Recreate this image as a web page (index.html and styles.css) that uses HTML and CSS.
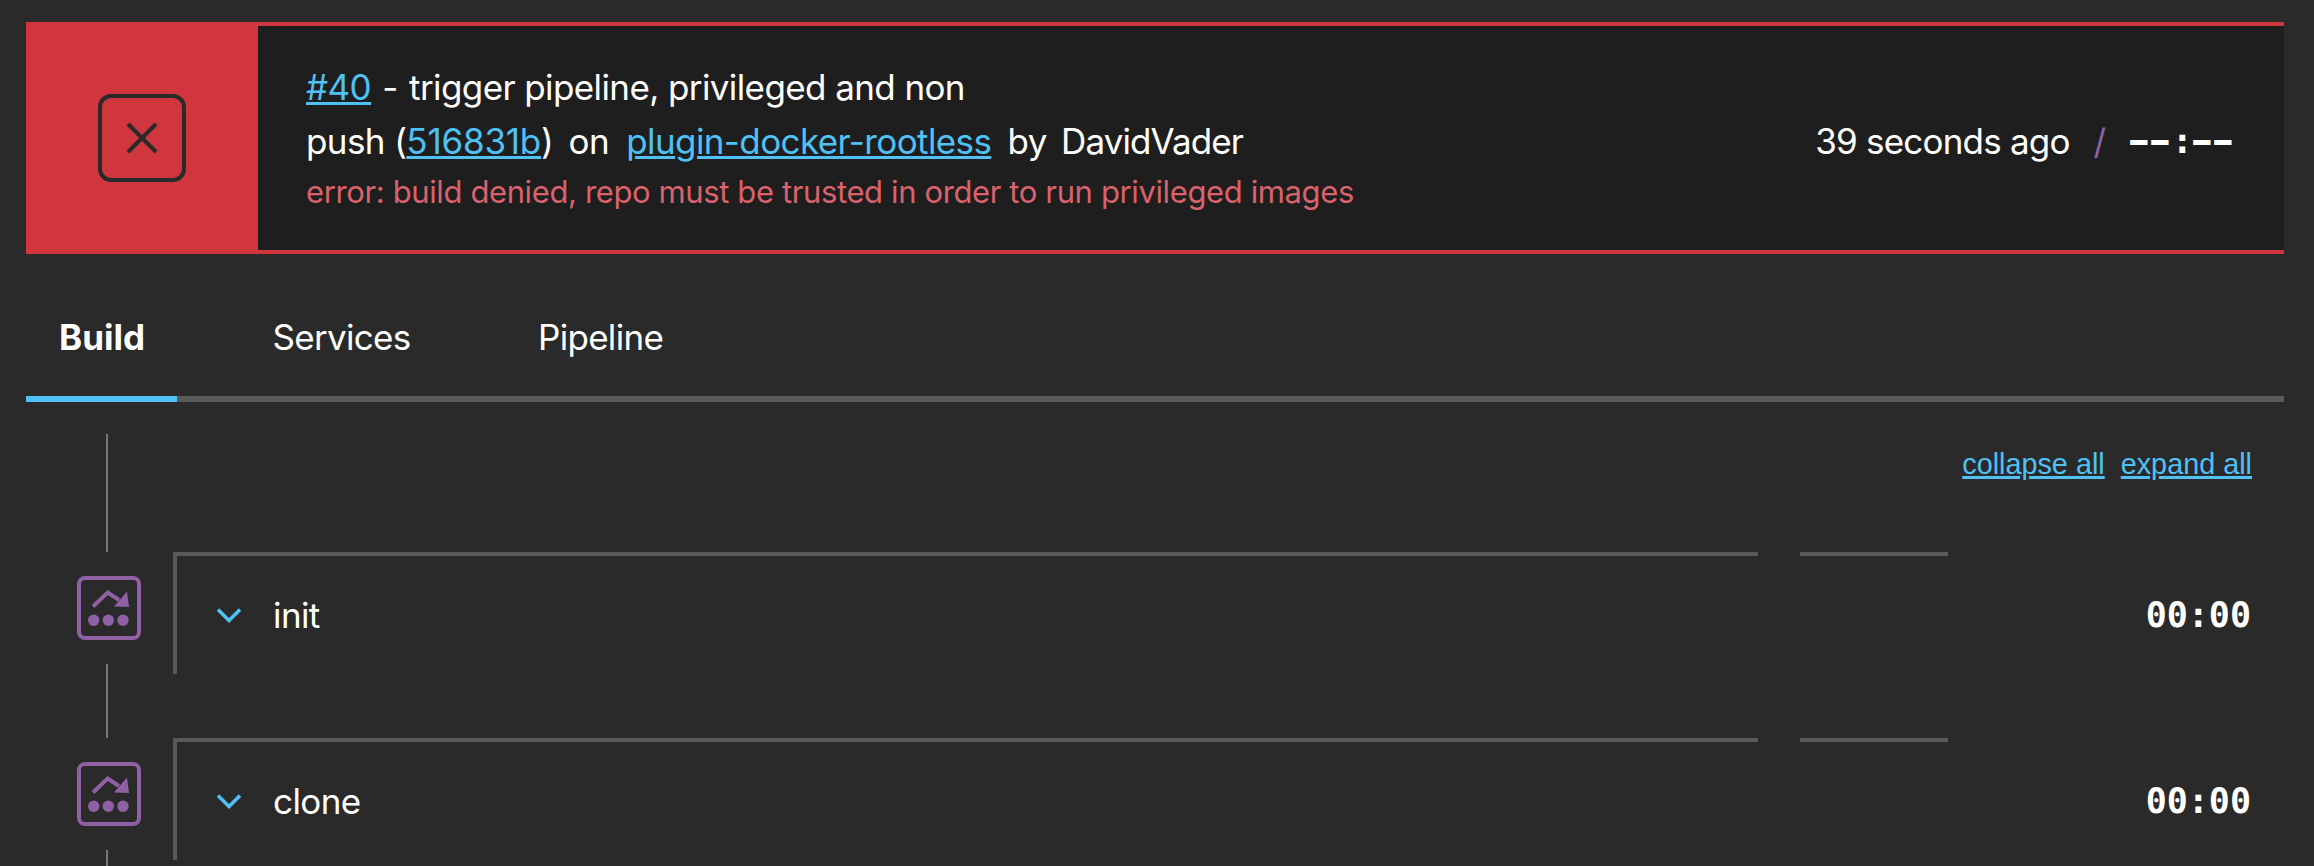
FILE: index.html
```html
<!DOCTYPE html>
<html lang="en">
<head>
  <meta charset="UTF-8" />
  <meta name="viewport" content="width=device-width, initial-scale=1">
  <title>#40 - trigger pipeline, privileged and non</title>
  <link rel="stylesheet" href="styles.css">
</head>
<body>
  <header class="banner">
    <div class="banner-status">
      <svg class="status-icon" viewBox="0 0 88 88" width="88" height="88" aria-hidden="true">
        <rect x="2" y="2" width="84" height="84" rx="11" fill="none" stroke="#2a2a2a" stroke-width="4"/>
        <path d="M30 30 L58 58 M58 30 L30 58" fill="none" stroke="#2a2a2a" stroke-width="4"/>
      </svg>
    </div>
    <div class="banner-info">
      <div class="title"><a href="#">#40</a> <span class="sep">-</span> trigger pipeline, privileged and non</div>
      <div class="meta">push (<a class="hash" href="#">516831b</a>) <span class="word-on">on</span> <a href="#">plugin-docker-rootless</a> <span class="word-by">by</span> <span class="author">DavidVader</span></div>
      <div class="error">error: build denied, repo must be trusted in order to run privileged images</div>
    </div>
    <div class="banner-time">
      <span class="ago">39 seconds ago</span>
      <span class="slash">/</span>
      <span class="mono"><span class="dash">-</span><span class="dash">-</span><span class="colon">:</span><span class="dash">-</span><span class="dash">-</span></span>
    </div>
  </header>

  <nav class="tabs">
    <a class="tab active" href="#">Build</a>
    <a class="tab" href="#">Services</a>
    <a class="tab" href="#">Pipeline</a>
  </nav>

  <section class="build">
    <div class="toolbar">
      <div class="rail"></div>
      <div class="toolbar-links">
        <a href="#">collapse all</a>
        <a href="#">expand all</a>
      </div>
    </div>

    <div class="step">
      <div class="step-side">
        <svg class="step-icon" viewBox="0 0 64 64" width="64" height="64" aria-hidden="true">
          <rect x="2" y="2" width="60" height="60" rx="6" fill="none" stroke="#8f60a3" stroke-width="4"/>
          <path d="M16 30.5 L30.7 16.5 L42 24" fill="none" stroke="#8f60a3" stroke-width="4"/>
          <path d="M50 15.5 L52 31 L37 30.5 Z" fill="#8f60a3"/>
          <circle cx="16.7" cy="44.3" r="5.7" fill="#8f60a3"/>
          <circle cx="31.3" cy="44.3" r="5.7" fill="#8f60a3"/>
          <circle cx="46" cy="44.3" r="5.7" fill="#8f60a3"/>
        </svg>
        <div class="rail"></div>
      </div>
      <div class="step-head">
        <div class="step-name">
          <svg class="chevron" viewBox="0 0 24 15" width="24" height="15" aria-hidden="true">
            <path d="M1 1.5 L12 12.5 L23 1.5" fill="none" stroke="#4fc1f5" stroke-width="3.5"/>
          </svg>
          <span>init</span>
        </div>
        <div class="step-col"></div>
        <div class="step-time">00:00</div>
      </div>
    </div>

    <div class="step">
      <div class="step-side">
        <svg class="step-icon" viewBox="0 0 64 64" width="64" height="64" aria-hidden="true">
          <rect x="2" y="2" width="60" height="60" rx="6" fill="none" stroke="#8f60a3" stroke-width="4"/>
          <path d="M16 30.5 L30.7 16.5 L42 24" fill="none" stroke="#8f60a3" stroke-width="4"/>
          <path d="M50 15.5 L52 31 L37 30.5 Z" fill="#8f60a3"/>
          <circle cx="16.7" cy="44.3" r="5.7" fill="#8f60a3"/>
          <circle cx="31.3" cy="44.3" r="5.7" fill="#8f60a3"/>
          <circle cx="46" cy="44.3" r="5.7" fill="#8f60a3"/>
        </svg>
        <div class="rail"></div>
      </div>
      <div class="step-head">
        <div class="step-name">
          <svg class="chevron" viewBox="0 0 24 15" width="24" height="15" aria-hidden="true">
            <path d="M1 1.5 L12 12.5 L23 1.5" fill="none" stroke="#4fc1f5" stroke-width="3.5"/>
          </svg>
          <span>clone</span>
        </div>
        <div class="step-col"></div>
        <div class="step-time">00:00</div>
      </div>
    </div>
  </section>
</body>
</html>
```

FILE: styles.css
```css
*, *::before, *::after { box-sizing: border-box; }
html, body { height: 100%; }
body {
  margin: 0;
  padding: 22px 30px 0 26px;
  overflow: hidden;
  background: #2a2a2a;
  color: #fff;
  font-family: Inter, "Liberation Sans", sans-serif;
  font-size: 35px;
  letter-spacing: -0.6px;
}
a {
  color: #4fc1f5;
  text-decoration-thickness: 3px;
}
.mono {
  font-family: "DejaVu Sans Mono", monospace;
  font-weight: 700;
  letter-spacing: 0;
}
/* stretched so the dashes nearly touch, as in the real mono face */
.dash {
  display: inline-block;
  margin: 0 5px;
  letter-spacing: -10px;
  transform-origin: left;
  transform: translateX(-13px) scaleX(1.6);
}
.colon {
  margin-right: 9px;
  letter-spacing: -9px;
}

/* banner */
.banner {
  display: flex;
  height: 232px;
  background: #1e1e1e;
  border-top: 4px solid #d1363e;
  border-bottom: 4px solid #d1363e;
}
.banner-status {
  display: flex;
  align-items: center;
  justify-content: center;
  flex: none;
  width: 232px;
  margin: -4px 0;
  background: #d1363e;
}
.status-icon { display: block; }
.banner-info {
  flex: 1;
  padding: 34px 0 0 48px;
}
.title, .meta { height: 54px; line-height: 54px; white-space: pre; }
.error {
  height: 48px;
  line-height: 48px;
  font-size: 31px;
  letter-spacing: -0.38px;
  color: #d9626c;
}
.hash { letter-spacing: -0.2px; }
.word-on { margin: 0 8px 0 6px; }
.word-by { margin: 0 5px 0 7px; }
.author { letter-spacing: -0.9px; }
.sep { margin: 0 2px; }
.banner-time {
  display: flex;
  align-items: center;
  gap: 24px;
  padding: 5px 49px 0 0;
}
.ago { letter-spacing: -0.8px; }
.slash { color: #8f60a3; }

/* tabs */
.tabs {
  display: flex;
  height: 148px;
  border-bottom: 6px solid #5a5a5a;
}
.tab {
  display: flex;
  align-items: center;
  height: 148px;
  margin-right: 62.5px;
  padding: 24px 32px 0 33px;
  color: #fff;
  letter-spacing: -0.7px;
  text-decoration: none;
  border-bottom: 6px solid transparent;
}
.tab.active {
  font-weight: 700;
  letter-spacing: 0;
  border-bottom-color: #4fc1f5;
}

/* build steps */
.build { margin-top: 32px; }
.rail { width: 2px; background: #757575; margin-left: 80px; }
.toolbar { display: flex; height: 118px; justify-content: space-between; }
.toolbar-links {
  display: flex;
  gap: 16px;
  padding: 14px 32px 0 0;
  font-family: "Liberation Sans", Arial, sans-serif;
  font-size: 28.8px;
  letter-spacing: 0;
}
.step { display: flex; height: 186px; }
.step-side {
  display: flex;
  flex-direction: column;
  flex: none;
  width: 147px;
}
.step-icon { display: block; margin: 24px 0 24px 51px; flex: none; }
.step-side .rail { flex: 1; }
.step-head {
  display: flex;
  flex: 1;
  height: 122px;
}
.step-name {
  display: flex;
  align-items: center;
  flex: none;
  width: 1585px;
  padding-left: 40px;
  gap: 32px;
  border-top: 4px solid #5a5a5a;
  border-left: 4px solid #5a5a5a;
}
.chevron { display: block; }
.step-col {
  flex: none;
  width: 148px;
  margin-left: 42px;
  border-top: 4px solid #5a5a5a;
}
.step-time {
  flex: 1;
  padding: 4px 33px 0 0;
  line-height: 118px;
  text-align: right;
  font-family: "DejaVu Sans Mono", monospace;
  font-weight: 700;
  letter-spacing: 0;
}
```
